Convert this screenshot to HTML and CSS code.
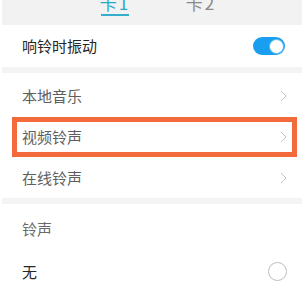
FILE: index.html
```html
<!DOCTYPE html>
<html lang="zh">
<head>
<meta charset="utf-8">
<link rel="stylesheet" href="styles.css">
</head>
<body>
<div class="page">
  <div class="tabs">
    <div class="tab active"><span class="tab-label">卡1</span><span class="tab-line"></span></div>
    <div class="tab"><span class="tab-label">卡2</span></div>
  </div>
  <div class="group">
    <div class="row vibrate">
      <span class="label dark">响铃时振动</span>
      <span class="switch"><span class="knob"></span></span>
    </div>
  </div>
  <div class="band"></div>
  <div class="group links">
    <div class="row link">
      <span class="label">本地音乐</span>
      <svg class="chev" width="7" height="12" viewBox="0 0 7 12"><path d="M1 1 L6 6 L1 11" fill="none" stroke="#c4c4c4" stroke-width="1"/></svg>
    </div>
    <div class="row link marked">
      <span class="label">视频铃声</span>
      <svg class="chev" width="7" height="12" viewBox="0 0 7 12"><path d="M1 1 L6 6 L1 11" fill="none" stroke="#c4c4c4" stroke-width="1"/></svg>
      <span class="mark"></span>
    </div>
    <div class="row link">
      <span class="label">在线铃声</span>
      <svg class="chev" width="7" height="12" viewBox="0 0 7 12"><path d="M1 1 L6 6 L1 11" fill="none" stroke="#c4c4c4" stroke-width="1"/></svg>
    </div>
  </div>
  <div class="band"></div>
  <div class="group">
    <div class="row header"><span class="label muted">铃声</span></div>
    <div class="row option">
      <span class="label dark">无</span>
      <span class="radio"></span>
    </div>
  </div>
</div>
</body>
</html>
```
FILE: styles.css
```css
html, body {
  margin: 0;
  padding: 0;
  background: #ffffff;
  overflow: hidden;
}
body {
  font-family: "Noto Sans CJK SC", "Noto Sans", sans-serif;
}
.page {
  margin: 0 5px 0 2px;
}
.tabs {
  height: 25px;
  background: #f2f2f2;
  display: flex;
  padding-left: 97px;
  gap: 54px;
  overflow: hidden;
}
.tab {
  display: flex;
  flex-direction: column;
  align-items: center;
  width: 32px;
}
.tab-label {
  font-size: 17px;
  line-height: 16px;
  letter-spacing: 2px;
  margin-top: -5px;
  color: #8a8a8a;
}
.tab.active .tab-label {
  color: #2aa8c9;
}
.tab-line {
  width: 28px;
  height: 2px;
  margin-top: 3px;
  background: #35aecd;
}
.band {
  height: 6px;
  background: #f4f4f4;
}
.group {
  background: #fff;
}
.row {
  display: flex;
  align-items: center;
  justify-content: space-between;
  padding: 0 15px 0 20px;
  position: relative;
}
.label {
  font-size: 15px;
  line-height: 20px;
  color: #5e5e5e;
}
.label.dark {
  color: #262626;
}
.label.muted {
  color: #6a6a6a;
}
.vibrate {
  height: 42px;
  padding-right: 17px;
}
.links {
  padding-top: 2px;
}
.link {
  height: 41px;
}
.chev {
  display: block;
}
.mark {
  position: absolute;
  left: 10px;
  right: 5px;
  top: 1px;
  bottom: 0;
  border: 5px solid #f36a3b;
}
.switch {
  width: 32px;
  height: 18px;
  border-radius: 9px;
  background: #1a9ff0;
  display: flex;
  justify-content: flex-end;
  align-items: center;
  padding: 0 1px;
  box-sizing: border-box;
}
.knob {
  width: 15px;
  height: 15px;
  border-radius: 50%;
  background: #fff;
  box-sizing: border-box;
  border: 1px solid #5ab8f0;
}
.header {
  height: 50px;
}
.option {
  height: 36px;
  align-items: flex-start;
  padding-top: 8px;
}
.radio {
  width: 19px;
  height: 19px;
  border-radius: 50%;
  border: 1px solid #bdbdbd;
  box-sizing: border-box;
}
```
